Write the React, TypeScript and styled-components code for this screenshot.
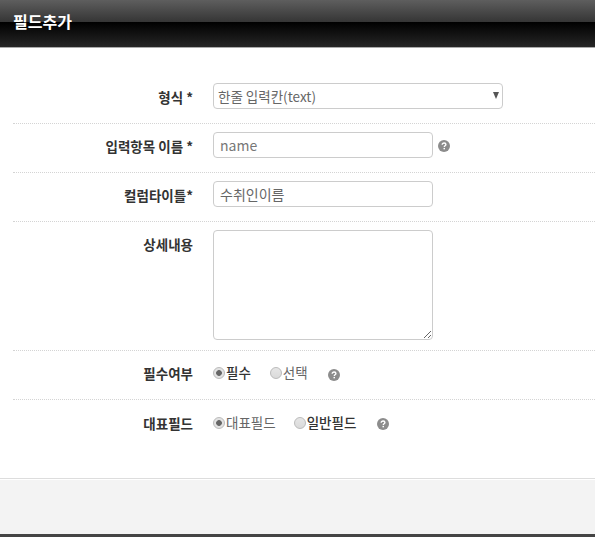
import React from 'react';
import styled, { createGlobalStyle } from 'styled-components';

const GlobalStyle = createGlobalStyle`
  html, body {
    margin: 0;
    padding: 0;
    background: #fff;
  }
  body {
    font-family: "Noto Sans CJK KR", "Open Sans", sans-serif;
    color: #333;
  }
`;

function HelpIcon({ offset, drop }: { offset: number; drop: number }) {
  return (
    <Help $offset={offset} $drop={drop}>
      <svg width="12" height="12" viewBox="0 0 12 12">
        <circle cx="6" cy="6" r="6" fill="#8c8c8c" />
        <path d="M4.2 4.7c0-1.1.8-1.7 1.9-1.7s1.8.6 1.8 1.5c0 1.3-1.6 1.3-1.6 2.5" fill="none" stroke="#fff" strokeWidth="1.4" />
        <rect x="5.5" y="7.9" width="1.5" height="1.4" fill="#fff" />
      </svg>
    </Help>
  );
}

function Radio({ label, checked, bold, gap }: { label: string; checked?: boolean; bold?: boolean; gap?: number }) {
  return (
    <RadioLabel $bold={bold} $gap={gap}>
      <RadioDot $checked={checked} />
      {label}
    </RadioLabel>
  );
}

export default function App() {
  return (
    <Page>
      <GlobalStyle />
      <Header>
        <Title>필드추가</Title>
      </Header>
      <Form>
        <Row>
          <Label>형식 *</Label>
          <SelectBox>
            <span>한줄 입력칸(text)</span>
            <Arrow />
          </SelectBox>
        </Row>
        <Row>
          <Label>입력항목 이름 *</Label>
          <Input placeholder="name" readOnly />
          <HelpIcon offset={5} drop={2} />
        </Row>
        <Row>
          <Label>컬럼타이틀*</Label>
          <Input value="수취인이름" readOnly />
        </Row>
        <TextRow>
          <Label>상세내용</Label>
          <TextArea readOnly />
        </TextRow>
        <RadioRow>
          <Label>필수여부</Label>
          <Radio label="필수" checked bold gap={19} />
          <Radio label="선택" />
          <HelpIcon offset={20} drop={5} />
        </RadioRow>
        <RadioRow $last>
          <Label>대표필드</Label>
          <Radio label="대표필드" checked gap={18} />
          <Radio label="일반필드" bold />
          <HelpIcon offset={21} drop={3} />
        </RadioRow>
      </Form>
      <Footer />
    </Page>
  );
}

const Page = styled.div`
  width: 595px;
  height: 537px;
  display: flex;
  flex-direction: column;
  overflow: hidden;
`;

const Header = styled.div`
  height: 47px;
  box-sizing: content-box;
  border-bottom: 1px solid #aaa;
  padding-left: 13px;
  background: linear-gradient(to bottom, #5e5e5e 0, #353535 22px, #000 22px, #262626 47px);
`;

const Title = styled.h3`
  margin: 0;
  font-size: 16px;
  font-weight: 700;
  line-height: 42px;
  color: #fff;
`;

const Form = styled.div`
  flex: 1;
  padding: 35px 0 0 13px;
  background: #fff;
`;

const Row = styled.div`
  display: flex;
  align-items: flex-start;
  padding: 8px 0 14px;
  border-bottom: 1px dotted #d4d4d4;
  &:first-child {
    padding-top: 0;
  }
`;

const TextRow = styled(Row)`
  padding-bottom: 10px;
`;

const RadioRow = styled(Row)<{ $last?: boolean }>`
  align-items: center;
  height: 26px;
  ${p => p.$last && 'padding-top: 9px; border-bottom: none;'}
`;

const Label = styled.label`
  width: 180px;
  height: 26px;
  margin-right: 20px;
  flex-shrink: 0;
  text-align: right;
  font-size: 13.5px;
  font-weight: 700;
  line-height: 28px;
  color: #333;
`;

const SelectBox = styled.div`
  width: 290px;
  height: 26px;
  box-sizing: border-box;
  display: flex;
  align-items: center;
  justify-content: space-between;
  padding: 0 3px 0 4px;
  background: #fff;
  border: 1px solid #ccc;
  border-radius: 4px;
  font-size: 13.5px;
  color: #666;
`;

const Arrow = styled.i`
  width: 0;
  height: 0;
  margin-bottom: 2px;
  border-left: 3.5px solid transparent;
  border-right: 3.5px solid transparent;
  border-top: 7px solid #555;
`;

const Input = styled.input`
  width: 220px;
  height: 26px;
  box-sizing: border-box;
  padding: 0 6px;
  background: #fff;
  border: 1px solid #ccc;
  border-radius: 4px;
  outline: none;
  font-family: inherit;
  font-size: 14px;
  color: #666;
  &::placeholder {
    color: #777;
  }
`;

const TextArea = styled.textarea`
  display: block;
  width: 220px;
  height: 110px;
  box-sizing: border-box;
  margin: 0;
  background: #fff;
  border: 1px solid #ccc;
  border-radius: 4px;
  outline: none;
`;

const Help = styled.span<{ $offset: number; $drop: number }>`
  display: flex;
  align-self: center;
  margin-left: ${p => p.$offset}px;
  margin-top: ${p => p.$drop}px;
`;

const RadioLabel = styled.span<{ $bold?: boolean; $gap?: number }>`
  display: flex;
  align-items: center;
  gap: 1px;
  margin-right: ${p => p.$gap ?? 0}px;
  font-size: 13.5px;
  font-weight: ${p => (p.$bold ? 500 : 400)};
  color: ${p => (p.$bold ? '#333' : '#666')};
`;

const RadioDot = styled.i<{ $checked?: boolean }>`
  width: 12px;
  height: 12px;
  margin-top: 2px;
  box-sizing: border-box;
  border: 1px solid #bbb;
  border-radius: 50%;
  background: ${p =>
    p.$checked
      ? 'radial-gradient(circle, #666 0, #666 2.5px, #e2e2e2 3.2px)'
      : 'linear-gradient(#e6e6e6, #dadada)'};
`;

const Footer = styled.div`
  height: 55px;
  background: #f3f3f3;
  border-top: 1px solid #ddd;
  box-shadow: inset 0 1px 0 #fff;
  border-bottom: 3px solid #444;
`;
